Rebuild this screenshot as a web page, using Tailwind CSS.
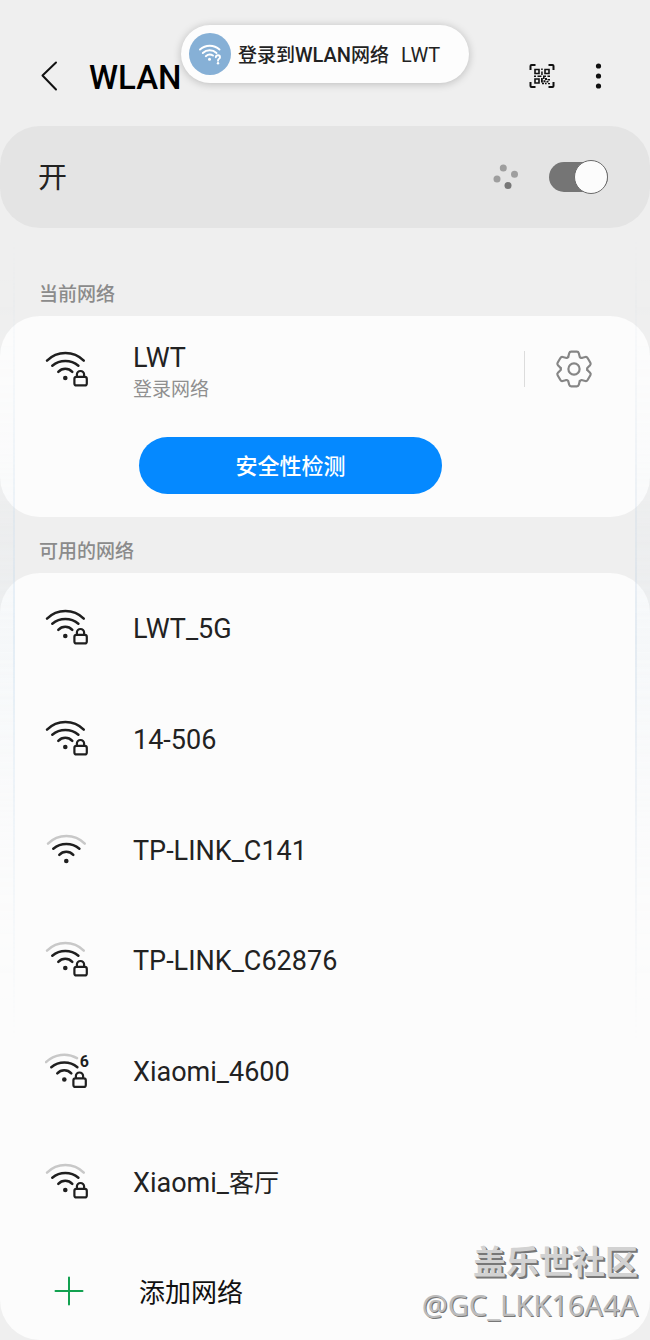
<!DOCTYPE html>
<html lang="zh-CN">
<head>
    <meta charset="UTF-8">
    <meta name="viewport" content="width=device-width, initial-scale=1.0">
    <title>WLAN</title>
    <script src="https://cdn.jsdelivr.net/npm/@tailwindcss/browser@4"></script>
</head>
<body class="bg-[#efefef] text-[#222] font-['Roboto','Noto_Sans_CJK_SC',sans-serif]">
    <!-- Shared icon parts -->
    <svg class="hidden" aria-hidden="true">
        <defs>
            <g id="wifi-inner" fill="none" stroke="#1f1f1f" stroke-width="2.5" stroke-linecap="round">
                <path d="M7.3 16.800A20.500 20.500 0 0 1 33.400 16.800"/>
                <path d="M13.300 22.800A9.600 9.600 0 0 1 27.300 22.800"/>
                <circle cx="20.300" cy="29" r="2.300" fill="#1f1f1f" stroke="none"/>
            </g>
            <path id="wifi-outer" d="M2 11.700A26 26 0 0 1 38.800 11.700" fill="none" stroke-width="2.500" stroke-linecap="round"/>
            <g id="lock" fill="none" stroke="#1f1f1f" stroke-width="2.200">
                <rect x="29.400" y="27.800" width="12.400" height="8.600" rx="2"/>
                <path d="M31.900 27.800V25.600a3.600 3.600 0 0 1 7.200 0V27.800"/>
            </g>
            <path id="gear-tooth" d="M-5.800-12L-4.800-15.800Q-4.400-17.300-2.800-17.300H2.800Q4.400-17.300 4.800-15.800L5.800-12Q6.400-11.200 7.500-11"/>
        </defs>
    </svg>

    <div class="relative">
        <header class="flex items-center h-[126px] pt-[26px] pl-[38px] pr-[40px]">
            <a href="#" aria-label="返回">
                <svg class="w-6 h-8" viewBox="0 0 24 32" fill="none" stroke="#111" stroke-width="2" stroke-linecap="round" stroke-linejoin="round">
                    <path d="M18 2.500L4.500 15.500L18 29.500"/>
                </svg>
            </a>
            <h1 class="pt-1 ml-[27px] text-[33px] leading-10 font-medium text-black">WLAN</h1>
            <div class="ml-auto flex items-center gap-[33px]">
                <button type="button" aria-label="扫描二维码">
                    <svg class="w-[26px] h-[26px]" viewBox="0 0 26 26" fill="none" stroke="#111" stroke-width="2">
                        <path d="M1.500 7V3Q1.500 2 2.500 2H6.500M19.500 2H23.500Q24.500 2 24.500 3V7M24.500 19V23Q24.500 24 23.500 24H19.500M6.500 24H2.500Q1.500 24 1.500 23V19"/>
                        <path d="M6 6.500h4v4h-4zM16 6.500h4v4h-4zM6 16h4v4h-4z" stroke-width="1.600"/>
                        <path d="M12.200 5.500h1.500v1.500h-1.500zM12.200 8.500h1.500v3.500h-1.500zM5 12.500h2v1.400h-2zM8.500 12.500h4v1.400h-4zM14 12.500h3v1.400h-3zM18.500 12.500h2.500v1.400h-2.500zM12 15h1.800v4.500h-1.800zM14 14h1.600v2h-1.600zM16 15h2v2h-2zM18.500 16h2.500v1.400h-2.500zM14.500 17.200h2v2h-2zM17.500 18h2v1.500h-2zM13 19.800h2v1.500h-2zM16 19.800h1.600v1.500h-1.600zM19 20h2v1.300h-2z" fill="#111" stroke="none"/>
                    </svg>
                </button>
                <button type="button" aria-label="更多选项">
                    <svg class="w-[22px] h-[26px]" viewBox="0 0 22 26" fill="#111">
                        <circle cx="10.500" cy="3" r="2.600"/>
                        <circle cx="10.500" cy="13" r="2.600"/>
                        <circle cx="10.500" cy="23" r="2.600"/>
                    </svg>
                </button>
            </div>
        </header>

        <!-- Sign-in toast -->
        <a href="#" class="absolute z-10 top-[25px] left-1/2 -translate-x-1/2 flex items-center h-[58px] w-[288px] pl-2 rounded-full bg-[#fdfdfd] shadow-[0_1px_8px_rgba(0,0,0,0.22)] text-[20px] whitespace-nowrap">
            <svg class="w-[42px] h-[42px] shrink-0" viewBox="0 0 42 42" fill="none" stroke="#fff" stroke-width="1.900" stroke-linecap="round">
                <circle cx="21" cy="21" r="21" fill="#86b0d6" stroke="none"/>
                <path d="M11 16.500A14.500 14.500 0 0 1 30.500 16.500M13.800 20A10 10 0 0 1 27.500 20M16.800 23.200A6 6 0 0 1 24 22.500"/>
                <circle cx="20.500" cy="26.300" r="1.500" fill="#fff" stroke="none"/>
                <path d="M26.800 24.200Q27 22.300 29 22.300Q31 22.300 31 24.200Q31 25.300 29.800 26Q29 26.500 29 27.700"/>
                <circle cx="29" cy="30.300" r="1.200" fill="#fff" stroke="none"/>
            </svg>
            <span class="pt-[2px] ml-[7px] text-[19px] font-medium">登录到<span class="text-[20px]">WLAN</span>网络</span>
            <span class="pt-[2px] ml-3">LWT</span>
        </a>

        <main>
            <div class="flex items-center h-[102px] pl-[38px] pr-[42px] rounded-[40px] bg-[#e4e4e4]">
                <label for="wlan-switch" class="pt-1 text-[29px]">开</label>
                <svg class="ml-auto w-[26px] h-[26px]" viewBox="0 0 26 26" fill="#9e9e9e">
                    <circle cx="10.300" cy="3.900" r="3.500"/>
                    <circle cx="21.500" cy="10.300" r="3.500"/>
                    <circle cx="4" cy="15" r="3.500"/>
                    <circle cx="15" cy="21.500" r="3.500" fill="#777"/>
                </svg>
                <input id="wlan-switch" type="checkbox" role="switch" checked class="appearance-none relative ml-[30px] w-[59px] h-[30px] rounded-full bg-[#757575] after:content-[''] after:absolute after:-top-[2px] after:right-0 after:w-[34px] after:h-[34px] after:rounded-full after:border-[1px] after:border-[#6b6b6b] after:bg-[#fcfcfc]">
            </div>

            <h2 class="mt-[53px] pl-[39px] text-[19px] leading-7 font-medium text-[#8b8b8b]">当前网络</h2>
            <section class="mt-[7px] h-[201px] rounded-[40px] bg-[#fcfcfc]">
                <div class="flex items-start pt-[25px] pl-[45px] pr-[57px]">
                    <svg class="mt-2 w-11 h-[42px]" viewBox="0 0 44 42">
                        <use href="#wifi-outer" stroke="#1f1f1f"/>
                        <use href="#wifi-inner"/>
                        <use href="#lock"/>
                    </svg>
                    <div class="pt-px ml-[44px]">
                        <p class="text-[27px] leading-8">LWT</p>
                        <p class="text-[19px] leading-8 text-[#8f8f8f]">登录网络</p>
                    </div>
                    <div class="ml-auto mt-[9px] flex items-center gap-[30px]">
                        <span class="w-px h-9 bg-[#dcdcdc]"></span>
                        <button type="button" aria-label="网络设置">
                            <svg class="w-[38px] h-[38px]" viewBox="-19 -19 38 38" fill="none" stroke="#868686" stroke-width="2.200" stroke-linecap="round" stroke-linejoin="round">
                                <use href="#gear-tooth"/>
                                <use href="#gear-tooth" transform="rotate(60)"/>
                                <use href="#gear-tooth" transform="rotate(120)"/>
                                <use href="#gear-tooth" transform="rotate(180)"/>
                                <use href="#gear-tooth" transform="rotate(240)"/>
                                <use href="#gear-tooth" transform="rotate(300)"/>
                                <circle r="5.600"/>
                            </svg>
                        </button>
                    </div>
                </div>
                <button type="button" class="mt-[31px] ml-[139px] pt-[2px] w-[303px] h-[57px] rounded-full bg-[#0589ff] text-white text-[22px] font-medium">安全性检测</button>
            </section>

            <h2 class="mt-[21px] pl-[39px] text-[19px] leading-7 font-medium text-[#8b8b8b]">可用的网络</h2>
            <section class="mt-[7px] rounded-[40px] bg-[#fcfcfc] text-[27px]">
                <ul>
                    <li>
                        <a href="#" class="flex items-center gap-[44px] h-[111px] pl-[45px]">
                            <svg class="w-11 h-[42px]" viewBox="0 1 44 42">
                                <use href="#wifi-outer" stroke="#1f1f1f"/>
                                <use href="#wifi-inner"/>
                                <use href="#lock"/>
                            </svg>
                            <span class="pt-px">LWT_5G</span>
                        </a>
                    </li>
                    <li>
                        <a href="#" class="flex items-center gap-[44px] h-[111px] pl-[45px]">
                            <svg class="w-11 h-[42px]" viewBox="0 1 44 42">
                                <use href="#wifi-outer" stroke="#1f1f1f"/>
                                <use href="#wifi-inner"/>
                                <use href="#lock"/>
                            </svg>
                            <span class="pt-px">14-506</span>
                        </a>
                    </li>
                    <li>
                        <a href="#" class="flex items-center gap-[44px] h-[111px] pl-[45px]">
                            <svg class="w-11 h-9" viewBox="-1 1 44 36">
                                <use href="#wifi-outer" stroke="#c8c8c8"/>
                                <use href="#wifi-inner"/>
                            </svg>
                            <span class="pt-px">TP-LINK_C141</span>
                        </a>
                    </li>
                    <li>
                        <a href="#" class="flex items-center gap-[44px] h-[111px] pl-[45px]">
                            <svg class="w-11 h-[42px]" viewBox="0 2 44 42">
                                <use href="#wifi-outer" stroke="#c8c8c8"/>
                                <use href="#wifi-inner"/>
                                <use href="#lock"/>
                            </svg>
                            <span>TP-LINK_C62876</span>
                        </a>
                    </li>
                    <li>
                        <a href="#" class="flex items-center gap-[44px] h-[111px] pl-[45px]">
                            <svg class="w-11 h-[42px]" viewBox="1 1.500 44 42">
                                <path d="M2 11.700A26 26 0 0 1 33 7.600" fill="none" stroke="#c8c8c8" stroke-width="2.500" stroke-linecap="round"/>
                                <use href="#wifi-inner"/>
                                <use href="#lock"/>
                                <text x="35.800" y="16" font-size="16" font-weight="700" fill="#1f1f1f">6</text>
                            </svg>
                            <span>Xiaomi_4600</span>
                        </a>
                    </li>
                    <li>
                        <a href="#" class="flex items-center gap-[44px] h-[111px] pl-[45px]">
                            <svg class="w-11 h-[42px]" viewBox="0 2 44 42">
                                <use href="#wifi-outer" stroke="#c8c8c8"/>
                                <use href="#wifi-inner"/>
                                <use href="#lock"/>
                            </svg>
                            <span>Xiaomi_<span class="text-[25px]">客厅</span></span>
                        </a>
                    </li>
                </ul>
                <button type="button" class="flex items-center gap-[50px] w-full h-[101px] pt-[2px] pl-[45px] text-[26px] text-[#111]">
                    <svg class="w-11 h-[30px]" viewBox="0 0 44 30" stroke="#12a150" stroke-width="2" stroke-linecap="round">
                        <path d="M10.500 15H37.500M24 1.500V28.500"/>
                    </svg>
                    <span class="pt-[5px]">添加网络</span>
                </button>
            </section>
        </main>

        <!-- Curved screen edge reflections -->
        <div class="absolute pointer-events-none left-0 top-[240px] w-[15px] h-[800px] border-r-2 border-[#b8d4ea]/30 bg-linear-to-b from-transparent via-[#dfeaf2]/20 to-transparent mask-y-from-50%"></div>
        <div class="absolute pointer-events-none right-0 top-[240px] w-[15px] h-[800px] border-l-2 border-[#b8cce0]/30 bg-linear-to-b from-transparent via-[#dfeaf2]/20 to-transparent mask-y-from-50%"></div>

        <!-- Community watermark -->
        <div class="absolute pointer-events-none right-3 bottom-[14px] text-right whitespace-nowrap">
            <p class="text-[33px] leading-[43px] font-bold text-[#d2d2d2] [text-shadow:1px_1px_0_#777,2px_2px_0_#777]">盖乐世社区</p>
            <p class="font-['Noto_Sans',sans-serif] text-[29px] leading-[42px] text-[#bbb] [text-shadow:1px_1px_0_#777]">@GC_LKK16A4A</p>
        </div>
    </div>
</body>
</html>
